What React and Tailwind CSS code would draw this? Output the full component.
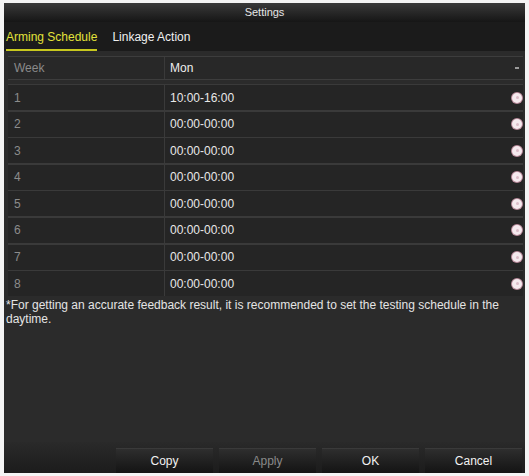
const ROWS = [
  { n: 1, time: '10:00-16:00' },
  { n: 2, time: '00:00-00:00' },
  { n: 3, time: '00:00-00:00' },
  { n: 4, time: '00:00-00:00' },
  { n: 5, time: '00:00-00:00' },
  { n: 6, time: '00:00-00:00' },
  { n: 7, time: '00:00-00:00' },
  { n: 8, time: '00:00-00:00' },
]

function Dot() {
  return (
    <span className="w-[10px] h-[10px] rounded-full bg-[#f5e9ee] shadow-[0_0_0_1px_#b88a9a] flex items-center justify-center">
      <span className="w-[3px] h-[3px] rounded-full bg-[#dcbcc8]" />
    </span>
  )
}

export default function App() {
  return (
    <div className="w-[529px] h-[476px] bg-[#f4f4f4] pt-[3px] pl-[4px] pr-[4px] pb-[3px] font-['Liberation_Sans',Arial,sans-serif]">
      <div className="h-full flex flex-col bg-[#2b2b2b]">
        {/* title bar */}
        <div className="h-[19px] flex items-center justify-center bg-gradient-to-b from-[#3a3a3a] to-[#161616] text-[11px] text-[#e6e6e6]">
          Settings
        </div>

        {/* tabs */}
        <div className="h-[29px] bg-[#1b1b1b] flex items-end gap-[15px] px-[2px] text-[12px]">
          <div className="pb-[5px] border-b-2 border-[#c8c81e] text-[#e2e23a] leading-[14px]">Arming Schedule</div>
          <div className="pb-[7px] text-[#f0f0f0] leading-[14px]">Linkage Action</div>
        </div>

        {/* schedule table */}
        <div className="pl-[4px] pr-[2px] pt-[5px] text-[12px]">
          <div className="h-[24px] flex border-y border-[#3d3d3d] bg-[#282828]">
            <div className="w-[157px] pl-[6px] flex items-center text-[#8a8a8a] border-r border-[#3a3a3a]">Week</div>
            <div className="flex-1 pl-[5px] pr-[4px] flex items-center justify-between text-[#eeeeee]">
              <span>Mon</span>
              <span className="w-[4px] h-[2px] bg-[#9a9a9a]" />
            </div>
          </div>
          <div className="mt-[4px] flex flex-col gap-[1.6px] bg-[#3a3a3a] pt-[1px]">
            {ROWS.map(r => (
              <div key={r.n} className="h-[25px] flex bg-[#252525]">
                <div className="w-[157px] pl-[6px] flex items-center text-[#8c8c8c] border-r border-[#3a3a3a]">{r.n}</div>
                <div className="flex-1 pl-[5px] pr-[1px] flex items-center justify-between text-[#e8e8e8]">
                  <span>{r.time}</span>
                  <Dot />
                </div>
              </div>
            ))}
          </div>
        </div>

        <p className="px-[2px] pt-[2px] text-[12px] leading-[14px] text-[#e4e4e4]">
          *For getting an accurate feedback result, it is recommended to set the testing schedule in the daytime.
        </p>

        <div className="flex-1" />

        {/* footer buttons */}
        <div className="h-[31px] bg-gradient-to-b from-[#2a2a2a] to-[#1c1c1c] flex items-end justify-end gap-[6px] pr-[3px] text-[12px]">
          {['Copy', 'Apply', 'OK', 'Cancel'].map(label => (
            <div
              key={label}
              className={`w-[97px] h-[25px] flex items-center justify-center bg-gradient-to-b from-[#2e2e2e] to-[#141414] border-t border-[#3a3a3a] ${
                label === 'Apply' ? 'text-[#8a8a8a]' : 'text-[#f2f2f2]'
              }`}
            >
              {label}
            </div>
          ))}
        </div>
      </div>
    </div>
  )
}
